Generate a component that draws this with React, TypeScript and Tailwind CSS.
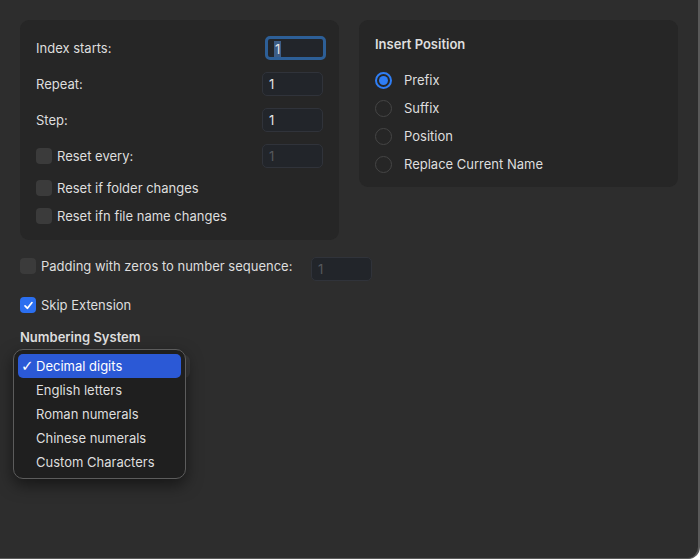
import React from "react";

const font = { fontFamily: "Inter, 'Noto Sans', 'Liberation Sans', sans-serif" };

function NumField({ value, focused, disabled }: { value: string; focused?: boolean; disabled?: boolean }) {
  return (
    <div
      className={
        "w-[61px] h-6 rounded-[5px] flex items-center pl-[6px] pt-[1px] text-[13px] bg-[#22252a] " +
        (focused
          ? "border-[3px] border-[#2d5f97] pl-[3px]"
          : "border border-[#30333a]") +
        (disabled ? " text-[#55585d]" : " text-[#e4e4e4]")
      }
    >
      {focused ? <span className="bg-[#3d5d86] leading-4 px-[1px]">{value}</span> : value}
    </div>
  );
}

function Check({ checked }: { checked?: boolean }) {
  return checked ? (
    <div className="w-4 h-4 rounded-[4px] bg-[#2b6ff0] flex items-center justify-center shrink-0">
      <svg width="11" height="11" viewBox="0 0 12 12" fill="none">
        <path d="M2.2 6.4 L4.9 9 L9.8 2.8" stroke="white" strokeWidth="1.9" strokeLinecap="round" strokeLinejoin="round" />
      </svg>
    </div>
  ) : (
    <div className="w-4 h-4 rounded-[4px] bg-[#3b3b3b] shrink-0" />
  );
}

function Radio({ selected, label }: { selected?: boolean; label: string }) {
  return (
    <div className="h-7 flex items-center gap-3">
      {selected ? (
        <div className="w-[17px] h-[17px] rounded-full border-2 border-[#2f7ef5] flex items-center justify-center">
          <div className="w-[9px] h-[9px] rounded-full bg-[#2f7ef5]" />
        </div>
      ) : (
        <div className="w-[17px] h-[17px] rounded-full border border-[#454545]" />
      )}
      <span className="pt-[2px]">{label}</span>
    </div>
  );
}

export default function App() {
  const options = ["Decimal digits", "English letters", "Roman numerals", "Chinese numerals", "Custom Characters"];
  return (
    <div
      style={font}
      className="relative w-[700px] h-[559px] bg-[#2d2d2d] border-r-2 border-b border-[#5a5a5a] rounded-br-[12px] text-[13px] text-[#dedede] overflow-hidden"
    >
      <div className="p-5">
        <div className="flex gap-5 items-start">
          {/* Left panel */}
          <div className="w-[320px] bg-[#262626] rounded-[9px] pt-4 px-4 pb-3 flex flex-col">
            <div className="flex flex-col gap-3">
              <div className="h-6 flex items-center justify-between">
                <span className="pt-[2px]">Index starts:</span>
                <div className="-mr-[3px]"><NumField value="1" focused /></div>
              </div>
              <div className="h-6 flex items-center justify-between">
                <span className="pt-[2px]">Repeat:</span>
                <NumField value="1" />
              </div>
              <div className="h-6 flex items-center justify-between">
                <span className="pt-[2px]">Step:</span>
                <NumField value="1" />
              </div>
              <div className="h-6 flex items-center justify-between">
                <div className="flex items-center gap-[5px]">
                  <Check />
                  <span className="pt-[1px]">Reset every:</span>
                </div>
                <NumField value="1" disabled />
              </div>
            </div>
            <div className="h-6 mt-2 flex items-center gap-[5px]">
              <Check />
              <span className="pt-[1px]">Reset if folder changes</span>
            </div>
            <div className="h-6 mt-1 flex items-center gap-[5px]">
              <Check />
              <span className="pt-[1px]">Reset ifn file name changes</span>
            </div>
          </div>

          {/* Right panel */}
          <div className="w-[320px] bg-[#262626] rounded-[9px] pt-4 px-4 pb-[9px]">
            <div className="h-4 leading-4 font-semibold">Insert Position</div>
            <div className="mt-[14px] flex flex-col">
              <Radio selected label="Prefix" />
              <Radio label="Suffix" />
              <Radio label="Position" />
              <Radio label="Replace Current Name" />
            </div>
          </div>
        </div>

        <div className="mt-[17px] flex items-start">
          <div className="w-[291px] mt-[1px] h-4 flex items-center gap-[5px]">
            <Check />
            <span className="pt-[1px]">Padding with zeros to number sequence:</span>
          </div>
          <NumField value="1" disabled />
        </div>

        <div className="mt-4 h-4 flex items-center gap-[5px]">
          <Check checked />
          <span className="pt-[1px]">Skip Extension</span>
        </div>

        <div className="mt-4 h-4 leading-4 font-semibold">Numbering System</div>

        <div className="mt-[10px] w-[170px] h-[23px] rounded-[6px] bg-[#3a3a3a]" />
      </div>

      {/* Popup menu */}
      <div className="absolute left-[13px] top-[349px] w-[173px] h-[130px] rounded-[10px] bg-[#1f1f1f] border border-[#5c5c5c] shadow-[0_6px_16px_rgba(0,0,0,0.5)] p-[4px] flex flex-col">
        {options.map((o, i) => (
          <div
            key={o}
            className={
              "h-6 flex items-center rounded-[5px] relative pl-[18px] pt-[1px] " +
              (i === 0 ? "bg-[#2b59d6] text-white" : "text-[#dedede]")
            }
          >
            {i === 0 && (
              <span className="absolute left-[3px] text-[15px] font-['DejaVu_Sans',sans-serif]">✓</span>
            )}
            {o}
          </div>
        ))}
      </div>
    </div>
  );
}
